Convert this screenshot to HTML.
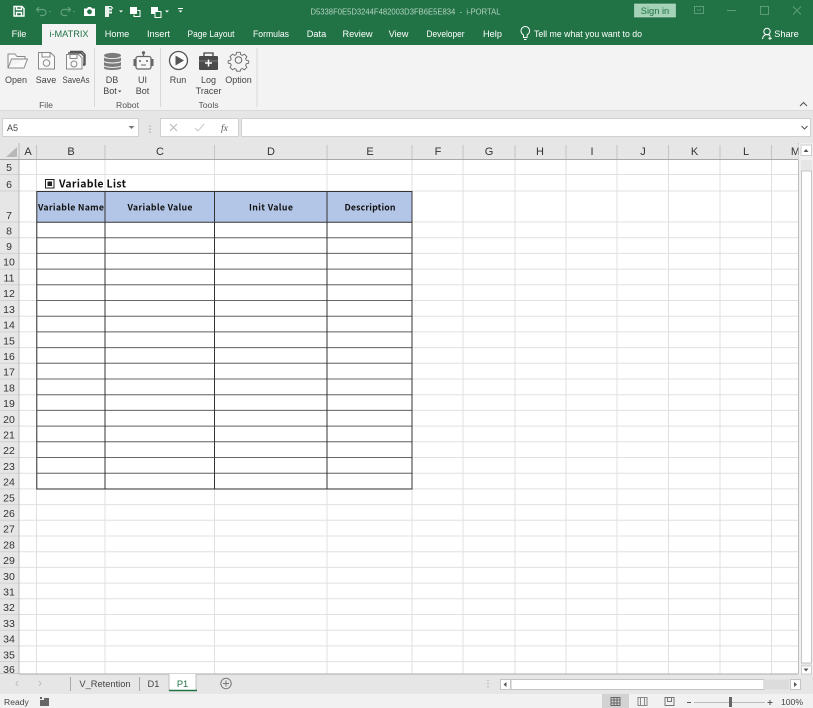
<!DOCTYPE html>
<html><head><meta charset="utf-8"><title>i-PORTAL</title>
<style>
html,body{margin:0;padding:0;width:813px;height:708px;overflow:hidden;background:#fff}
svg{display:block;filter:blur(.3px)}
text{font-family:"Liberation Sans","Noto Sans CJK KR",sans-serif}
.tab{fill:#fff;font-size:9.2px;text-anchor:middle}
.rb{fill:#444;font-size:9px;text-anchor:middle}
.gl{fill:#555;font-size:8.6px;text-anchor:middle}
.col{fill:#333;font-size:11px;text-anchor:middle}
.row text{fill:#333;font-size:10.5px;text-anchor:middle}
.hd{fill:#111;font-size:8.8px;font-weight:700;text-anchor:middle;font-family:"Noto Sans CJK KR","Liberation Sans",sans-serif}
</style></head><body>
<svg width="813" height="708" viewBox="0 0 813 708" xmlns="http://www.w3.org/2000/svg">
<!-- backgrounds -->
<rect width="813" height="45" fill="#217346"/>
<rect y="45" width="813" height="65" fill="#f3f3f3"/>
<rect y="110" width="813" height="34" fill="#e6e6e6"/>
<rect y="143" width="813" height="17" fill="#e6e6e6"/>
<rect y="160" width="19" height="514" fill="#e6e6e6"/>
<rect x="798" y="143" width="15" height="531" fill="#f0f0f0"/>
<rect y="674" width="813" height="20" fill="#e6e6e6"/>
<rect y="694" width="813" height="14" fill="#f1f1f1"/>

<!-- QAT -->
<g fill="none" stroke="#fff" stroke-width="1.4">
<path d="M14 6.500h8l2 2v7.500h-10z"/><path d="M16.500 6.500v3h5v-3M16.500 16v-3.500h5V16"/>
</g>
<g fill="none" stroke="#63a07e" stroke-width="1.2">
<path d="M37 9.500h6a3 3 0 0 1 0 6h-3M39 7l-2.500 2.500L39 12"/><path d="M70 9.500h-6a3 3 0 0 0 0 6h3M68 7l2.500 2.500L68 12"/>
</g>
<path d="M49 11l2 0-1 1.500zM73 11l2 0-1 1.500z" fill="#63a07e"/>
<path d="M84 8.500h3l1-1.500h3l1 1.500h3V16H84z" fill="#fff"/><circle cx="89.500" cy="11.800" r="2.400" fill="#217346"/>
<path d="M105 6h4v2.500h3v2h-3v1h3v2h-3V17h-4z" fill="#fff" opacity=".9"/><path d="M109 6.500h2l2 2" stroke="#fff" fill="none"/>
<path d="M119 10.500h4l-2 2z" fill="#fff"/>
<rect x="130" y="7" width="7" height="7" fill="#fff"/><path d="M137.500 10.500h2.500v6h-6v-2" fill="none" stroke="#fff"/>
<rect x="151" y="7" width="7" height="7" fill="#fff"/><path d="M155 11.500h6v6h-6z" fill="#217346" stroke="#fff"/>
<path d="M165 10.500h4l-2 2z" fill="#fff"/>
<path d="M178 8.500h5" stroke="#fff"/><path d="M178.500 10.500h4l-2 2z" fill="#fff"/>

<text x="405.500" y="14.500" fill="#b5d2c1" font-size="8.500" text-anchor="middle" textLength="190" lengthAdjust="spacingAndGlyphs" xml:space="preserve" style="white-space:pre">D5338F0E5D3244F482003D3FB6E5E834  -  i-PORTAL</text>

<rect x="634.500" y="4" width="41" height="13" fill="#a3d2b6" stroke="#c0e2cd" stroke-width=".6"/>
<text x="655" y="14" fill="#217346" font-size="9.300" text-anchor="middle">Sign in</text>
<g fill="none" stroke="#5d9c79">
<rect x="694.500" y="6.500" width="9" height="7"/><path d="M697 10h1.500M700 9v2"/>
<path d="M727 10.500h9"/><rect x="760.500" y="6.500" width="8" height="8"/>
<path d="M793 6.500l8 8M801 6.500l-8 8"/>
</g>

<!-- tabs -->
<path d="M42 45V24h54v21z" fill="#f3f3f3"/>
<text class="tab" x="19" y="37">File</text>
<text class="tab" x="69" y="37" style="fill:#217346">i-MATRIX</text>
<text class="tab" x="117" y="37">Home</text>
<text class="tab" x="158.500" y="37">Insert</text>
<text class="tab" x="211" y="37" textLength="47" lengthAdjust="spacingAndGlyphs">Page Layout</text>
<text class="tab" x="271" y="37" textLength="36" lengthAdjust="spacingAndGlyphs">Formulas</text>
<text class="tab" x="316.500" y="37">Data</text>
<text class="tab" x="357.500" y="37">Review</text>
<text class="tab" x="398.500" y="37">View</text>
<text class="tab" x="445.500" y="37" textLength="38" lengthAdjust="spacingAndGlyphs">Developer</text>
<text class="tab" x="492.500" y="37">Help</text>
<g fill="none" stroke="#fff" stroke-width="1"><path d="M523.500 37.500v-2.500c-1.500-1-2.500-2.500-2.500-4.200a4.300 4.300 0 0 1 8.600 0c0 1.700-1 3.200-2.500 4.200v2.500zM524 39.500h2.500"/></g>
<text class="tab" x="534" y="37" style="text-anchor:start" textLength="108" lengthAdjust="spacingAndGlyphs">Tell me what you want to do</text>
<g fill="none" stroke="#fff" stroke-width="1"><circle cx="767" cy="31.500" r="3.200"/><path d="M762.500 39c.5-3 2-4.500 4.500-4.500 1.500 0 2.500.5 3.300 1.500M770 36.500v3.500M768.300 38.300h3.500"/></g>
<text class="tab" x="786.500" y="37">Share</text>

<!-- Ribbon icons -->
<g fill="#fafafa" stroke="#888" stroke-width="1">
<path d="M8 68V54h7l2 2.500h8V59H11.500L8 68h16l3.500-9H25" stroke-linejoin="round"/>
<path d="M38.500 52.500h12l4 4v12.500h-16z"/><rect x="42" y="52.500" width="8" height="4.500" fill="none"/><circle cx="46.500" cy="63" r="3.300" fill="none"/>
<path d="M70 51.500h12l3 3v10h-2M68 53h13l3 3v10" fill="none" stroke="#555" stroke-width="1.400"/>
<path d="M66.500 54.500h12l3.500 3.500v11H66.500z"/><rect x="70" y="54.500" width="7" height="4" fill="none"/><circle cx="74" cy="64" r="3" fill="none"/>
</g>
<!-- DB -->
<g fill="#7b7b7b">
<ellipse cx="112.500" cy="55.500" rx="8.500" ry="2.600"/>
<path d="M104 57.500c1.500 2 15.500 2 17 0v3.300c-1.500 2.200-15.500 2.200-17 0z"/>
<path d="M104 62c1.500 2 15.500 2 17 0v3.300c-1.500 2.200-15.500 2.200-17 0z"/>
<path d="M104 66.400c1.500 2 15.500 2 17 0v2c-1.500 2.200-15.500 2.200-17 0z"/>
</g>
<!-- UI bot -->
<g fill="none" stroke="#666" stroke-width="1.300">
<rect x="136" y="56.500" width="15" height="12.500" rx="2" fill="#f8f8f8"/>
<path d="M143.500 52.500v4"/><circle cx="143.500" cy="52.800" r="1" fill="#666"/>
</g>
<rect x="133.500" y="59" width="2.500" height="7" fill="#666"/><rect x="151" y="59" width="2.500" height="7" fill="#666"/>
<circle cx="140" cy="61" r="1" fill="#666"/><circle cx="147" cy="61" r="1" fill="#666"/><path d="M141 65h5" stroke="#666"/>
<!-- Run -->
<circle cx="178.500" cy="60.500" r="9" fill="#fafafa" stroke="#555" stroke-width="1.300"/>
<path d="M175.500 55.500l8.500 5-8.500 5z" fill="#555"/>
<!-- Log tracer -->
<path d="M204 56v-3h9v3" fill="none" stroke="#444" stroke-width="1.300"/>
<rect x="199" y="56" width="19" height="14" rx="1" fill="#4a4a4a"/>
<path d="M199 61h19" stroke="#f3f3f3" stroke-width=".6" opacity=".6"/>
<path d="M208.500 59.500v7M205 63h7" stroke="#fff" stroke-width="1.500"/>
<!-- Gear -->
<g fill="none" stroke="#666" stroke-width="1">
<circle cx="238.500" cy="60" r="3.300"/>
<path d="M236.500 51.500h4l.6 2.600 1.700.8 2.300-1.400 2.800 2.800-1.400 2.300.8 1.700 2.600.6v2.600l-2.600.6-.8 1.700 1.400 2.300-2.800 2.800-2.300-1.400-1.700.8-.6 2.100h-4l-.6-2.100-1.700-.8-2.300 1.400-2.800-2.800 1.400-2.300-.8-1.700-2.600-.6v-2.600l2.600-.6.8-1.700-1.400-2.300 2.800-2.800 2.300 1.400 1.700-.8z" transform="translate(23.800 6) scale(.9)"/>
</g>

<text class="rb" x="16" y="83">Open</text>
<text class="rb" x="46" y="83">Save</text>
<text class="rb" x="76" y="83" textLength="27" lengthAdjust="spacingAndGlyphs">SaveAs</text>
<text class="rb" x="112" y="83">DB</text>
<text class="rb" x="110" y="94">Bot</text><path d="M118 90.500h3.500l-1.750 2z" fill="#555"/>
<text class="rb" x="142.500" y="83">UI</text>
<text class="rb" x="142.500" y="94">Bot</text>
<text class="rb" x="178" y="83">Run</text>
<text class="rb" x="208.500" y="83">Log</text>
<text class="rb" x="208.500" y="94">Tracer</text>
<text class="rb" x="238.500" y="83">Option</text>
<text class="gl" x="46" y="108">File</text>
<text class="gl" x="127.500" y="108">Robot</text>
<text class="gl" x="208.500" y="108">Tools</text>
<path d="M94.500 48v59M160.500 48v59M257 48v59" stroke="#d8d8d8"/>
<path d="M800 106l3.500-3.500 3.500 3.500" fill="none" stroke="#555" stroke-width="1.100"/>
<path d="M0 110.500h813" stroke="#dadada"/>

<!-- formula bar -->
<rect x="2.500" y="118.500" width="136" height="18" fill="#fff" stroke="#d0d0d0"/>
<text x="7" y="131" fill="#444" font-size="9">A5</text>
<path d="M128.500 126h6l-3 3z" fill="#777"/>
<path d="M150 125.500v1.500M150 128.500v1.500M150 131.500v1.500" stroke="#999"/>
<rect x="160.500" y="118.500" width="78" height="18" fill="#fff" stroke="#d0d0d0"/>
<path d="M170 124l7 7M177 124l-7 7" stroke="#bbb" stroke-width="1.100"/>
<path d="M195 128l3 3 6-7" fill="none" stroke="#ccc" stroke-width="1.100"/>
<text x="221" y="131" fill="#555" font-size="9.500" font-style="italic" style="font-family:'Liberation Serif',serif">fx</text>
<rect x="241.500" y="118.500" width="569" height="18" fill="#fff" stroke="#d0d0d0"/>
<path d="M801.500 126l3 3 3-3" fill="none" stroke="#555" stroke-width="1.100"/>

<!-- grid -->
<rect x="19" y="160" width="779" height="514" fill="#fff"/>
<g stroke="#e0e0e0" stroke-width="1">
<path d="M36.500 160V674M105 160V674M214.500 160V674M327 160V674M412 160V674M463 160V674M515 160V674M566 160V674M617 160V674M668.500 160V674M720 160V674M771.500 160V674"/>
<path d="M19 174.500H798M19 191H798M19 222H798M19 237.700H798M19 253.400H798M19 269.100H798M19 284.800H798M19 300.500H798M19 316.200H798M19 331.900H798M19 347.600H798M19 363.300H798M19 379H798M19 394.700H798M19 410.400H798M19 426.100H798M19 441.800H798M19 457.500H798M19 473.200H798M19 488.900H798M19 504.600H798M19 520.300H798M19 536H798M19 551.700H798M19 567.400H798M19 583.100H798M19 598.800H798M19 614.500H798M19 630.200H798M19 645.900H798M19 661.600H798"/>
</g>
<!-- row header separators -->
<g stroke="#d2d2d2" stroke-width="1">
<path d="M0 174.500H19M0 191H19M0 222H19M0 237.700H19M0 253.400H19M0 269.100H19M0 284.800H19M0 300.500H19M0 316.200H19M0 331.900H19M0 347.600H19M0 363.300H19M0 379H19M0 394.700H19M0 410.400H19M0 426.100H19M0 441.800H19M0 457.500H19M0 473.200H19M0 488.900H19M0 504.600H19M0 520.300H19M0 536H19M0 551.700H19M0 567.400H19M0 583.100H19M0 598.800H19M0 614.500H19M0 630.200H19M0 645.900H19M0 661.600H19"/>
</g>
<path d="M19 143V674" stroke="#b8b8b8"/>
<path d="M0 159.500H798" stroke="#a8a8a8"/>
<path d="M36.500 145V159M105 145V159M214.500 145V159M327 145V159M412 145V159M463 145V159M515 145V159M566 145V159M617 145V159M668.500 145V159M720 145V159M771.500 145V159" stroke="#c4c4c4"/>
<path d="M6 157l11-10v10z" fill="#b8b8b8"/>
<path d="M798.500 143V674" stroke="#bbb"/>
<path d="M0 674H798" stroke="#aaa"/>
<text class="col" x="28" y="155">A</text><text class="col" x="71" y="155">B</text><text class="col" x="160" y="155">C</text><text class="col" x="271" y="155">D</text><text class="col" x="370" y="155">E</text><text class="col" x="438" y="155">F</text><text class="col" x="489" y="155">G</text><text class="col" x="540" y="155">H</text><text class="col" x="592" y="155">I</text><text class="col" x="643" y="155">J</text><text class="col" x="694.500" y="155">K</text><text class="col" x="746" y="155">L</text><text class="col" x="795.500" y="155">M</text>
<rect x="798.500" y="144" width="14.500" height="16" fill="#f0f0f0"/>
<g class="row">
<text x="9" y="171">5</text><text x="9" y="188">6</text><text x="9" y="219">7</text><text x="9" y="234.500">8</text><text x="9" y="250">9</text><text x="9" y="265.500">10</text><text x="9" y="281.500">11</text><text x="9" y="297">12</text><text x="9" y="313">13</text><text x="9" y="328.500">14</text><text x="9" y="344.500">15</text><text x="9" y="360">16</text><text x="9" y="375.500">17</text><text x="9" y="391.500">18</text><text x="9" y="407">19</text><text x="9" y="423">20</text><text x="9" y="438.500">21</text><text x="9" y="454">22</text><text x="9" y="470">23</text><text x="9" y="485.500">24</text><text x="9" y="501.500">25</text><text x="9" y="517">26</text><text x="9" y="532.500">27</text><text x="9" y="548.500">28</text><text x="9" y="564">29</text><text x="9" y="580">30</text><text x="9" y="595.500">31</text><text x="9" y="611">32</text><text x="9" y="627">33</text><text x="9" y="642.500">34</text><text x="9" y="658.500">35</text><text x="9" y="673">36</text>
</g>
<path d="M0 674H19V694H0z" fill="#e6e6e6"/>

<!-- Table -->
<rect x="37" y="191.500" width="375" height="31" fill="#b4c6e7"/>
<g stroke="#666" stroke-width="1">
<path d="M37 237.700H412M37 253.400H412M37 269.100H412M37 284.800H412M37 300.500H412M37 316.200H412M37 331.900H412M37 347.600H412M37 363.300H412M37 379H412M37 394.700H412M37 410.400H412M37 426.100H412M37 441.800H412M37 457.500H412M37 473.200H412"/>
</g>
<g stroke="#333" stroke-width="1">
<path d="M105 191.500V489M214.500 191.500V489M327 191.500V489"/>
<path d="M37 222.300H412"/>
<rect x="36.800" y="191.500" width="375.200" height="297.500" fill="none"/>
</g>
<rect x="45.500" y="179.500" width="8.500" height="8.500" fill="#fff" stroke="#222"/>
<rect x="47.500" y="181.500" width="4.500" height="4.500" fill="#222"/>
<text x="59" y="187.500" fill="#111" font-size="10.500" font-weight="700" textLength="67" style="font-family:'Noto Sans CJK KR','Liberation Sans',sans-serif">Variable List</text>
<text class="hd" x="71" y="210.500" textLength="66">Variable Name</text>
<text class="hd" x="160" y="210.500" textLength="65">Variable Value</text>
<text class="hd" x="271" y="210.500" textLength="44">Init Value</text>
<text class="hd" x="370" y="210.500" textLength="51">Description</text>

<!-- vertical scrollbar -->
<rect x="801" y="160" width="11" height="514" fill="#e6e6e6"/>
<rect x="801" y="145" width="10.500" height="10.500" fill="#fff" stroke="#ccc"/>
<path d="M803.500 152l2.500-3 2.500 3z" fill="#555"/>
<rect x="801.500" y="171" width="10" height="492" fill="#fff" stroke="#c4c4c4"/>
<rect x="801.500" y="666" width="10" height="8" fill="#fff" stroke="#ccc"/>
<path d="M803.500 668.500l2.500 3 2.500-3z" fill="#555"/>

<!-- sheet tabs -->
<path d="M18 681l-2 2.500 2 2.500M39 681l2 2.500-2 2.500" fill="none" stroke="#bbb"/>
<path d="M70.500 677V691M139.500 677V691" stroke="#aaa"/>
<text x="105" y="687" fill="#444" font-size="9.300" text-anchor="middle">V_Retention</text>
<text x="153.500" y="687" fill="#444" font-size="9.300" text-anchor="middle">D1</text>
<rect x="169" y="674" width="27" height="17" fill="#fff"/>
<path d="M169 674V691M196 674V691" stroke="#c0c0c0"/>
<path d="M169 690.500H197" stroke="#217346" stroke-width="1.600"/>
<text x="182.500" y="687" fill="#217346" font-size="9.300" text-anchor="middle">P1</text>
<circle cx="226" cy="683.500" r="5.200" fill="none" stroke="#777"/>
<path d="M223 683.500h6M226 680.500v6" stroke="#777"/>
<path d="M488 680v1.500M488 683v1.500M488 686v1.500" stroke="#aaa"/>
<rect x="500.500" y="679.500" width="10" height="10" fill="#fff" stroke="#c4c4c4"/>
<path d="M506.500 682v5l-3-2.500z" fill="#555"/>
<rect x="511" y="679.500" width="253" height="10" fill="#fff" stroke="#c4c4c4"/>
<rect x="764" y="679.500" width="25" height="10" fill="#dcdcdc"/>
<rect x="790.500" y="679.500" width="10" height="10" fill="#fff" stroke="#c4c4c4"/>
<path d="M794 682v5l3-2.500z" fill="#555"/>

<!-- status bar -->
<text x="4" y="705" fill="#444" font-size="8.600">Ready</text>
<path d="M40 697h2v2h-2zM44 698h5v8h-9v-6h4z" fill="#666"/>
<rect x="602" y="694" width="27" height="14" fill="#d2d2d2"/>
<path d="M611 697.500h9v8h-9zM611 700h9M611 703h9M614 697.500v8M617 697.500v8" fill="none" stroke="#666"/>
<path d="M638 697.500h9v8h-9zM640.500 697.500v8M644.500 697.500v8" fill="none" stroke="#888"/>
<path d="M665 697.500h9v8h-9zM667.500 697.500v4h4v-4" fill="none" stroke="#777"/>
<path d="M687 702.500h4M767.500 702.500h5M770 700v5" stroke="#555"/>
<path d="M694 702.500h71" stroke="#bbb"/>
<rect x="729" y="697" width="3" height="10" fill="#666"/>
<text x="781" y="705" fill="#444" font-size="8.600">100%</text>
</svg>
</body></html>
